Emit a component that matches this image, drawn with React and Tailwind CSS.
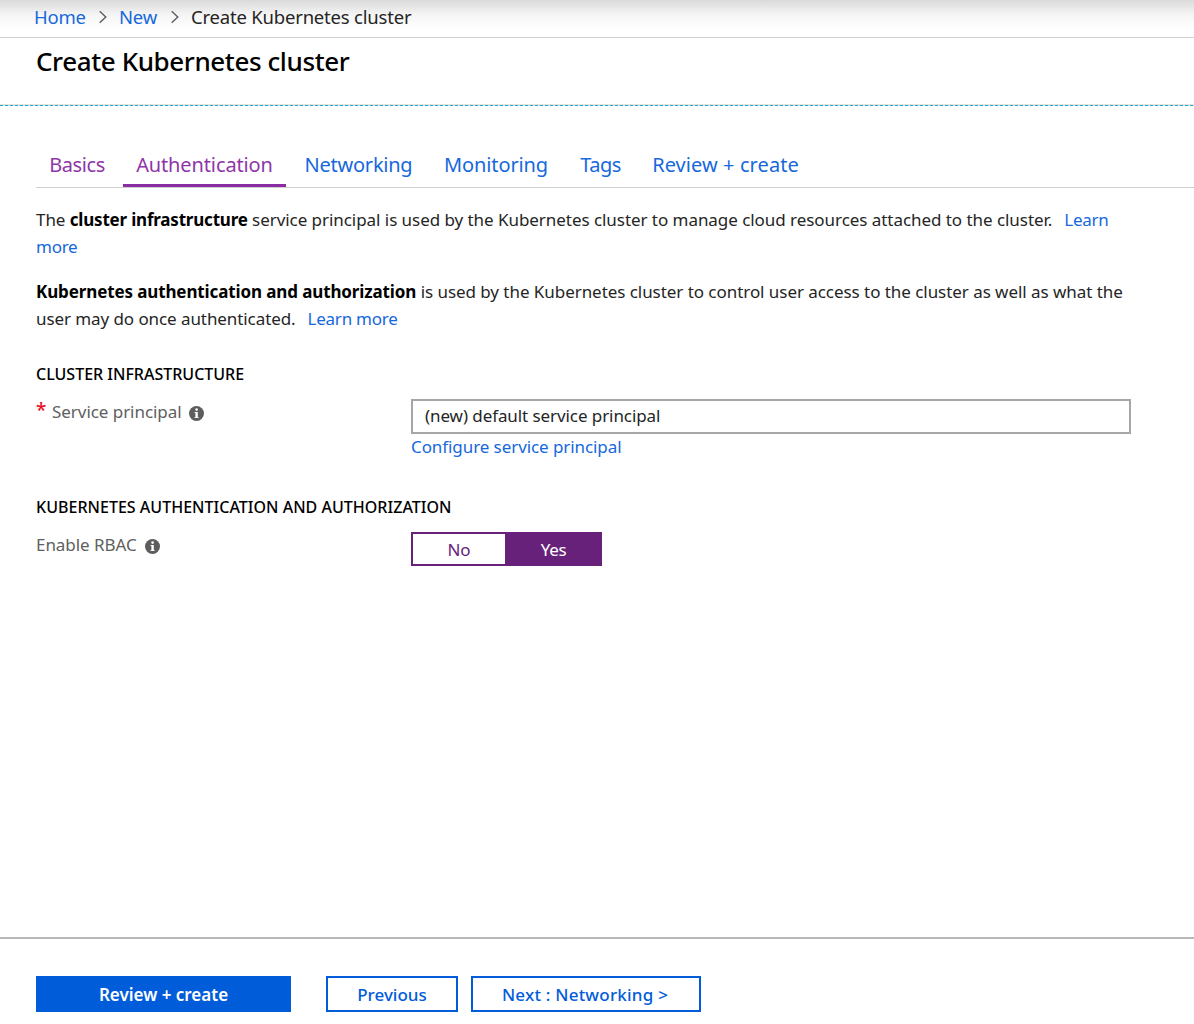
function Chevron() {
  return (
    <svg className="h-[14px] w-[8px] text-[#5c5c5c]" viewBox="0 0 8 14" fill="none" stroke="currentColor" strokeWidth="1.4">
      <path d="M0.7 1.2 6.8 7 0.7 12.8" />
    </svg>
  );
}

function InfoIcon() {
  return (
    <svg className="mt-[2px] h-[15px] w-[15px]" viewBox="0 0 15 15">
      <circle cx="7.5" cy="7.5" r="7.5" fill="#5d5d5d" />
      <circle cx="7.6" cy="3.6" r="1.3" fill="#fff" />
      <path d="M5.4 6h3.4v5.2h1V12H5.4v-.8h1V6.8h-1z" fill="#fff" />
    </svg>
  );
}

const tabs = [
  { label: "Basics", style: "w-[82px] text-[#8f35a8] tracking-[-0.4px]" },
  { label: "Authentication", style: "w-[163px] text-[#8f35a8] border-b-3 border-[#8a2da5] tracking-[-0.12px]" },
  { label: "Networking", style: "w-[135px] text-[#1668dc] tracking-[-0.24px]" },
  { label: "Monitoring", style: "w-[130px] text-[#1668dc] tracking-[-0.1px]" },
  { label: "Tags", style: "w-[68px] pl-px text-[#1668dc] tracking-[-0.5px]" },
  { label: "Review + create", style: "w-[173px] text-[#1668dc] tracking-[0.08px]" },
];

export default function App() {
  return (
    <div className="flex h-[1024px] w-[1194px] flex-col overflow-hidden bg-white font-['Noto_Sans','Open_Sans',sans-serif] text-[17px] font-normal tracking-[-0.05px] text-[#252525]">
      <nav className="flex h-[38px] shrink-0 items-center border-b border-[#d2d2d2] bg-linear-to-b from-[#dadada] via-[#f5f5f5] via-40% to-white to-80% pb-[3px] pl-[34px] text-[18.5px] tracking-[-0.2px]">
        <a className="w-[65px] text-[#1668dc]">Home</a>
        <Chevron />
        <a className="ml-[12px] w-[52px] text-[#1668dc]">New</a>
        <Chevron />
        <span className="ml-[12px]">Create Kubernetes cluster</span>
      </nav>

      <header className="h-[66px] shrink-0 pl-[36px] pt-[5px]">
        <h1 className="text-[26px] leading-[36px] font-medium tracking-[-0.4px] text-black">Create Kubernetes cluster</h1>
      </header>
      <div className="h-px shrink-0 bg-[#e9e2df]" />
      <div className="h-px shrink-0 bg-[repeating-linear-gradient(90deg,#19acd9_0_3px,#d5dde0_3px_5px)]" />

      <main className="grow pl-[36px]">
        <div className="mt-[37px] flex h-[45px] gap-[5px] border-b border-[#cfcfcf] text-[20px]">
          {tabs.map((t) => (
            <a key={t.label} className={"flex h-[44px] items-start justify-center whitespace-nowrap pt-[8px] leading-[28px] " + t.style}>
              {t.label}
            </a>
          ))}
        </div>

        <p className="mt-[18px] leading-[27px] whitespace-nowrap">
          The <b className="font-bold tracking-[-0.2px] text-black">cluster infrastructure</b>{" "}
          <span>service principal is used by the Kubernetes cluster to manage cloud resources attached to the cluster.</span>
          <a className="ml-[12px] text-[#1668dc] tracking-[-0.25px]">Learn<br />more</a>
        </p>
        <p className="mt-[18px] leading-[27px] whitespace-nowrap">
          <b className="font-bold tracking-[-0.12px] text-black">Kubernetes authentication and authorization</b>{" "}
          <span>is used by the Kubernetes cluster to control user access to the cluster as well as what the</span>
          <br />
          <span className="tracking-[-0.08px]">user may do once authenticated.</span>
          <a className="ml-[12px] text-[#1668dc] tracking-[-0.25px]">Learn more</a>
        </p>

        <h2 className="mt-[30px] text-[16px] leading-[24px] font-medium tracking-[0px] text-black">CLUSTER INFRASTRUCTURE</h2>
        <div className="mt-[13px] flex">
          <div className="flex h-[26px] w-[375px] items-center text-[#606060]">
            <span className="w-[16px] pb-[4px] text-[19px] font-medium text-[#e81123]">*</span>
            <span className="w-[137px]">Service principal</span>
            <InfoIcon />
          </div>
          <div>
            <div className="flex h-[35px] w-[720px] items-center border-2 border-[#a6a6a6] pb-[2px] pl-[12px] tracking-[-0.08px]">(new) default service principal</div>
            <a className="block leading-[26px] text-[#1668dc] tracking-[-0.08px]">Configure service principal</a>
          </div>
        </div>

        <h2 className="mt-[35px] text-[16px] leading-[24px] font-medium tracking-[0.02px] text-black">KUBERNETES AUTHENTICATION AND AUTHORIZATION</h2>
        <div className="mt-[13px] flex">
          <div className="flex h-[26px] w-[375px] items-center text-[#606060]">
            <span className="w-[109px]">Enable RBAC</span>
            <InfoIcon />
          </div>
          <div className="flex h-[34px] w-[191px] border-2 border-[#68217a] text-center leading-[31px]">
            <div className="w-[92px] text-[#68217a]">No</div>
            <div className="grow bg-[#68217a] pl-[2px] text-white tracking-[-0.3px]">Yes</div>
          </div>
        </div>
      </main>

      <footer className="flex h-[87px] shrink-0 border-t-2 border-[#b8b8b8] pl-[36px] pt-[37px] leading-[32px] font-medium tracking-[0px] text-[#015cda]">
        <button className="h-[36px] w-[255px] border-2 border-[#015cda] bg-[#015cda] pt-px font-semibold text-white">Review + create</button>
        <button className="ml-[35px] h-[36px] w-[132px] border-2 border-[#015cda] pt-px">Previous</button>
        <button className="ml-[13px] h-[36px] w-[230px] border-2 border-[#015cda] pt-px pr-[2px] tracking-[0.22px]">Next : Networking &gt;</button>
      </footer>
    </div>
  );
}
